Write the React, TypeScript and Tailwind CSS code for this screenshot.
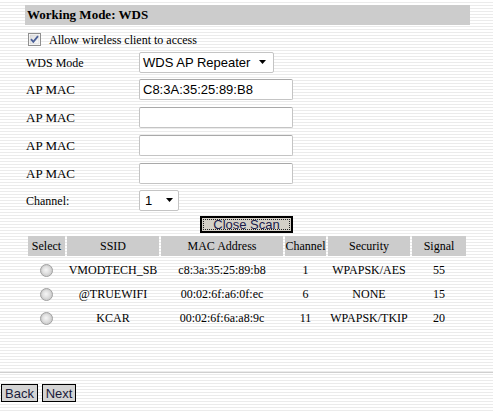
import React from "react";

const serif = { fontFamily: "'Liberation Serif', 'Times New Roman', serif" };
const sans = { fontFamily: "'Liberation Sans', Arial, sans-serif" };

function Checkbox() {
  return (
    <svg width="13" height="13" viewBox="0 0 13 13" className="block">
      <defs>
        <linearGradient id="cbg" x1="0" y1="0" x2="1" y2="1">
          <stop offset="0" stopColor="#dcdcdc" />
          <stop offset="1" stopColor="#fbfbfb" />
        </linearGradient>
      </defs>
      <rect x="0.5" y="0.5" width="12" height="12" fill="#fff" stroke="#8f8f8f" />
      <rect x="2" y="2" width="9" height="9" fill="url(#cbg)" stroke="#c6c6c6" strokeWidth="0.5" />
      <path d="M3 6.2 L5.3 8.8 L10 3.2" fill="none" stroke="#4a5f97" strokeWidth="1.8" />
    </svg>
  );
}

function Radio() {
  return (
    <svg width="13" height="13" viewBox="0 0 13 13" className="block">
      <defs>
        <radialGradient id="rg" cx="0.45" cy="0.45" r="0.55">
          <stop offset="0" stopColor="#f6f6f6" />
          <stop offset="1" stopColor="#d6d6d6" />
        </radialGradient>
      </defs>
      <circle cx="6.5" cy="6.5" r="6" fill="#d0d0d0" stroke="#a0a0a0" strokeWidth="1" />
      <circle cx="6.5" cy="6.5" r="4.5" fill="url(#rg)" />
    </svg>
  );
}

function Arrow() {
  return (
    <svg width="8" height="5" viewBox="0 0 8 5" className="block">
      <path d="M0 0 H7 L3.5 4 Z" fill="#000" />
    </svg>
  );
}

const rows = [
  { ssid: "VMODTECH_SB", mac: "c8:3a:35:25:89:b8", ch: "1", sec: "WPAPSK/AES", sig: "55" },
  { ssid: "@TRUEWIFI", mac: "00:02:6f:a6:0f:ec", ch: "6", sec: "NONE", sig: "15" },
  { ssid: "KCAR", mac: "00:02:6f:6a:a8:9c", ch: "11", sec: "WPAPSK/TKIP", sig: "20" },
];

export default function App() {
  return (
    <div
      className="relative w-[493px] h-[411px] overflow-hidden text-black bg-[repeating-linear-gradient(to_bottom,#ffffff_0px,#ffffff_2px,#ebebeb_2px,#ebebeb_3px)]"
      style={serif}
    >
      <div className="pl-[25px] pt-[5px] w-[470px]">
        {/* header bar */}
        <div className="h-[20px] bg-[#cccccc] flex items-center pl-[2px] text-[13px] font-bold">
          Working Mode: WDS
        </div>

        {/* checkbox row */}
        <div className="mt-[8px] flex items-center h-[13px] pl-[3px] text-[12px]">
          <Checkbox />
          <span className="ml-[8px]">Allow wireless client to access</span>
        </div>

        {/* form rows */}
        <div className="mt-[6px] text-[13px]">
          <div className="flex items-center h-[21px]">
            <div className="w-[114px] pl-[1px] text-[12px]">WDS Mode</div>
            <div
              className="w-[135px] h-[21px] bg-white border border-[#c4c4c4] rounded-[2px] flex items-center justify-between pl-[3px] pr-[6px] text-[13px]"
              style={sans}
            >
              <span>WDS AP Repeater</span>
              <Arrow />
            </div>
          </div>
          {["C8:3A:35:25:89:B8", "", "", ""].map((v, i) => (
            <div key={i} className={`flex items-center h-[21px] ${i === 0 ? "mt-[6px]" : "mt-[7px]"}`}>
              <div className="w-[114px] pl-[1px]">AP MAC</div>
              <div
                className="w-[154px] h-[21px] bg-white border border-[#c4c4c4] border-t-[#a9a9a9] rounded-[2px] flex items-center pl-[3px] text-[13px]"
                style={sans}
              >
                {v}
              </div>
            </div>
          ))}
          <div className="flex items-center h-[21px] mt-[6px]">
            <div className="w-[114px] pl-[1px] text-[12px]">Channel:</div>
            <div
              className="w-[40px] h-[21px] bg-white border border-[#c4c4c4] rounded-[2px] flex items-center justify-between pl-[5px] pr-[4px] text-[13px]"
              style={sans}
            >
              <span>1</span>
              <Arrow />
            </div>
          </div>
        </div>

        {/* close scan */}
        <div className="mt-[5px] pl-[175px]">
          <div className="w-[93px] h-[17px] border-2 border-black bg-[#d4d0c8] p-[1px] flex" style={sans}>
            <div className="flex-1 border border-dotted border-[#222] flex items-center justify-center text-[13px] leading-none text-[#1a1a4a]">
              Close Scan
            </div>
          </div>
        </div>

        {/* table */}
        <div className="mt-[3px] pl-[3px] text-[12px]">
          <div className="grid grid-cols-[37px_92px_122px_41px_82px_54px] gap-x-[2px]">
            {["Select", "SSID", "MAC Address", "Channel", "Security", "Signal"].map((h) => (
              <div key={h} className="h-[20px] bg-[#cccccc] flex items-center justify-center whitespace-nowrap">
                {h}
              </div>
            ))}
          </div>
          <div className="mt-[2px]">
            {rows.map((r) => (
              <div key={r.ssid} className="grid grid-cols-[37px_92px_122px_41px_82px_54px] gap-x-[2px] h-[24px] items-center">
                <div className="flex justify-center"><Radio /></div>
                <div className="text-center whitespace-nowrap">{r.ssid}</div>
                <div className="text-center whitespace-nowrap">{r.mac}</div>
                <div className="text-center">{r.ch}</div>
                <div className="text-center whitespace-nowrap">{r.sec}</div>
                <div className="text-center">{r.sig}</div>
              </div>
            ))}
          </div>
        </div>
      </div>

      {/* separator */}
      <div className="absolute left-0 right-0 top-[372px] h-px bg-[#cfcfcf]" />

      {/* bottom buttons */}
      <div className="absolute left-[1px] top-[384px] flex gap-[4px] text-[13px]" style={sans}>
        <div className="w-[37px] h-[18px] border border-black bg-[#d4d4d4] flex items-center justify-center text-[#1a1a3a] leading-none">
          Back
        </div>
        <div className="w-[34px] h-[18px] border border-black bg-[#d4d4d4] flex items-center justify-center text-[#1a1a3a] leading-none">
          Next
        </div>
      </div>
    </div>
  );
}
